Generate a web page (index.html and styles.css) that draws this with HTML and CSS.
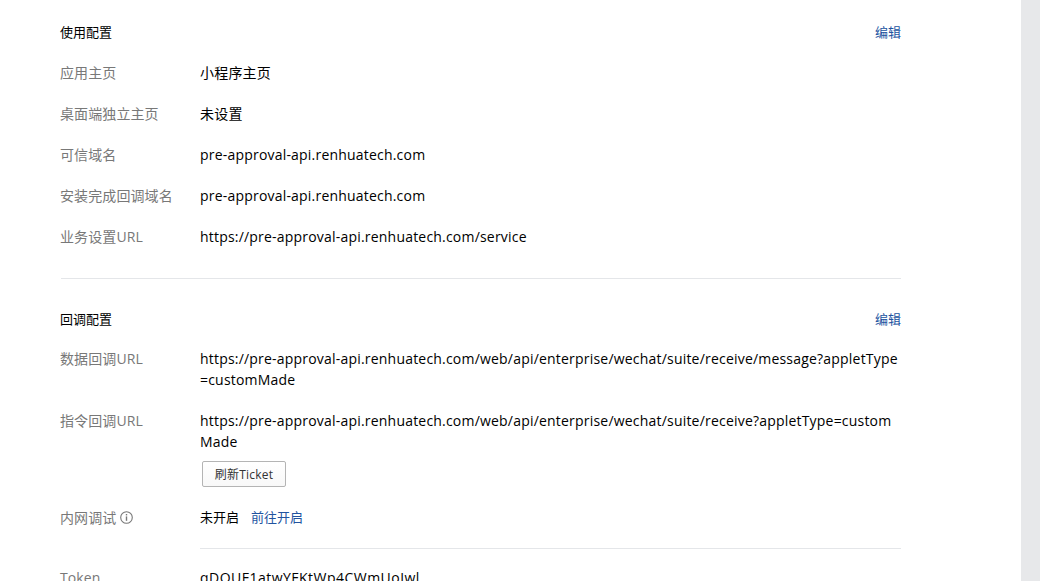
FILE: index.html
```html
<!DOCTYPE html>
<html lang="zh-CN">
<head>
<meta charset="utf-8">
<title>配置</title>
<link rel="stylesheet" href="styles.css">
</head>
<body>
<div class="layout">
  <main class="content">
    <section class="section section-first">
      <header class="section-head"><h2 class="section-title">使用配置</h2><a class="link">编辑</a></header>
      <div class="row"><div class="label">应用主页</div><div class="value">小程序主页</div></div>
      <div class="row"><div class="label">桌面端独立主页</div><div class="value">未设置</div></div>
      <div class="row"><div class="label">可信域名</div><div class="value">pre-approval-api.renhuatech.com</div></div>
      <div class="row"><div class="label">安装完成回调域名</div><div class="value">pre-approval-api.renhuatech.com</div></div>
      <div class="row"><div class="label">业务设置URL</div><div class="value">https://pre-approval-api.renhuatech.com/service</div></div>
    </section>
    <section class="section section-second">
      <header class="section-head"><h2 class="section-title">回调配置</h2><a class="link">编辑</a></header>
      <div class="row"><div class="label">数据回调URL</div><div class="value">https://pre-approval-api.renhuatech.com/web/api/enterprise/wechat/suite/receive/message?appletType=customMade</div></div>
      <div class="row row-action"><div class="label">指令回调URL</div><div class="value">https://pre-approval-api.renhuatech.com/web/api/enterprise/wechat/suite/receive?appletType=customMade<button class="btn" type="button">刷新Ticket</button></div></div>
      <div class="row row-debug"><div class="label label-icon">内网调试
        <svg class="info" viewBox="0 0 13 13" width="13" height="13"><circle cx="6.5" cy="6.5" r="5.8" fill="none" stroke="#787878" stroke-width="1.1"/><rect x="5.8" y="5.4" width="1.4" height="4.4" fill="#787878"/><rect x="5.8" y="3" width="1.4" height="1.4" fill="#787878"/></svg>
      </div><div class="value value-status">未开启<a class="link link-gap">前往开启</a></div></div>
      <div class="inner-divider"></div>
      <div class="row"><div class="label">Token</div><div class="value value-token">qDOUF1atwYFKtWp4CWmUoJwl</div></div>
    </section>
  </main>
  <div class="scrollbar"></div>
</div>
</body>
</html>
```

FILE: styles.css
```css
* { box-sizing: border-box; }
html, body { margin: 0; height: 581px; overflow: hidden; background: #fff; }
body { font-family: "Open Sans", "Noto Sans CJK SC", sans-serif; font-size: 14px; line-height: 21px; color: #000; }
.layout { display: flex; height: 581px; overflow: hidden; }
.content { flex: 1; padding: 22px 120px 0 60px; min-width: 0; }
.scrollbar { width: 19px; background: #e7e8ea; }
.section { padding-top: 30px; }
.section-first { padding-top: 0; padding-bottom: 11px; border-bottom: 1px solid #e4e6e9; margin-left: 1px; }
.section-first > * { margin-left: -1px; }
.section-head { display: flex; justify-content: space-between; align-items: center; height: 21px; margin-bottom: 19px; }
.section-second .section-head { margin-bottom: 18px; }
.section-title { margin: 0; font-size: 13px; font-weight: 400; color: #000; }
.link { color: #22539f; font-size: 13px; cursor: pointer; }
.row { display: flex; margin-bottom: 20px; }
.label { width: 140px; flex: none; color: #787878; font-size: 14px; letter-spacing: .1px; }
.label-icon { display: flex; align-items: center; gap: 4px; height: 21px; }
.value { flex: 1; min-width: 0; word-break: break-all; letter-spacing: .2px; }
.value-status { font-size: 13px; letter-spacing: 0; }
.value-token { letter-spacing: .48px; }
.link-gap { margin-left: 12px; }
.btn { display: block; margin: 9px 0 0 2px; width: 84px; height: 26px; padding: 0; background: linear-gradient(#fff, #f8f8f8); border: 1px solid #b4b4b4; border-radius: 2px; font: 12px "Open Sans", "Noto Sans CJK SC", sans-serif; letter-spacing: .2px; color: #333; }
.inner-divider { margin: 0 0 18px 140px; height: 1px; background: #e4e6e9; }
.info { flex: none; }
```
